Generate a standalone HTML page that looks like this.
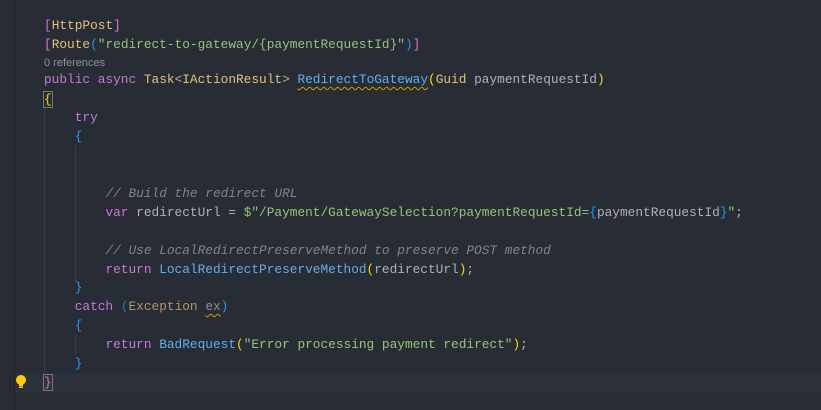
<!DOCTYPE html>
<html><head><style>
body{margin:0;width:821px;height:410px;background:#282c34;overflow:hidden;position:relative;font-family:"Liberation Mono",monospace;font-size:12.8px;color:#abb2bf}
.l{position:absolute;left:44px;height:19px;line-height:19px;white-space:pre}
.k{color:#c678dd}.t{color:#e5c07b}.f{color:#61afef}.s{color:#98c379}.c{color:#7f848e;font-style:italic}
.b1{color:#ffd700}.b2{color:#da70d6}.b3{color:#179fff}.p{color:#c8ccd4}
.sq{text-decoration:underline wavy #c8a000;text-underline-offset:3px;text-decoration-thickness:1px}
.g{position:absolute;width:1px;background:#3b4048}
</style></head><body>
<div style="position:absolute;left:14px;top:0;width:1px;height:410px;background:#1f2228"></div>
<div style="position:absolute;left:15px;top:373px;width:806px;height:19px;background:#2c313c"></div>
<div class="g" style="left:44px;top:108px;height:265px"></div>
<div class="g" style="left:75px;top:146px;height:136px"></div>
<div class="g" style="left:75px;top:335px;height:19px"></div>
<div class="l" style="top:16px"><span class="b2">[</span><span class="t">HttpPost</span><span class="b2">]</span></div>
<div class="l" style="top:35px"><span class="b2">[</span><span class="t">Route</span><span class="b3">(</span><span class="s">"redirect-to-gateway/{paymentRequestId}"</span><span class="b3">)</span><span class="b2">]</span></div>
<div class="l" style="top:54px;font-family:'Liberation Sans',sans-serif;font-size:11px;color:#8b919a">0 references</div>
<div class="l" style="top:70px"><span class="k">public async</span> <span class="t">Task</span>&lt;<span class="t">IActionResult</span>&gt; <span class="f sq">RedirectToGateway</span><span class="b1">(</span><span class="t">Guid</span> paymentRequestId<span class="b1">)</span></div>
<div class="l" style="top:90px"><span class="b1" style="outline:1px solid #777">{</span></div>
<div class="l" style="top:108px">    <span class="k">try</span></div>
<div class="l" style="top:127px">    <span class="b3">{</span></div>
<div class="l" style="top:184px">        <span class="c">// Build the redirect URL</span></div>
<div class="l" style="top:203px">        <span class="k">var</span> redirectUrl = <span class="s">$"/Payment/GatewaySelection?paymentRequestId=</span><span class="b3">{</span>paymentRequestId<span class="b3">}</span><span class="s">"</span>;</div>
<div class="l" style="top:241px">        <span class="c">// Use LocalRedirectPreserveMethod to preserve POST method</span></div>
<div class="l" style="top:260px">        <span class="k">return</span> <span class="f">LocalRedirectPreserveMethod</span><span class="b1">(</span>redirectUrl<span class="b1">)</span>;</div>
<div class="l" style="top:278px">    <span class="b3">}</span></div>
<div class="l" style="top:297px">    <span class="k">catch</span> <span class="b3" style="opacity:.7">(</span><span class="t" style="opacity:.7">Exception</span> <span class="sq" style="color:#8b919a">ex</span><span class="b3">)</span></div>
<div class="l" style="top:316px">    <span class="b3">{</span></div>
<div class="l" style="top:335px">        <span class="k">return</span> <span class="f">BadRequest</span><span class="b1">(</span><span class="s">"Error processing payment redirect"</span><span class="b1">)</span>;</div>
<div class="l" style="top:354px">    <span class="b3">}</span></div>
<div class="l" style="top:373px"><span class="b2" style="outline:1px solid #777">}</span></div>
<svg style="position:absolute;left:15px;top:374px" width="12" height="16" viewBox="0 0 12 16"><circle cx="6" cy="6" r="5" fill="#ffcc00"/><rect x="4" y="10" width="4" height="4" fill="#ffcc00"/><rect x="4" y="12" width="4" height="1" fill="#b08a00"/></svg>
</body></html>
